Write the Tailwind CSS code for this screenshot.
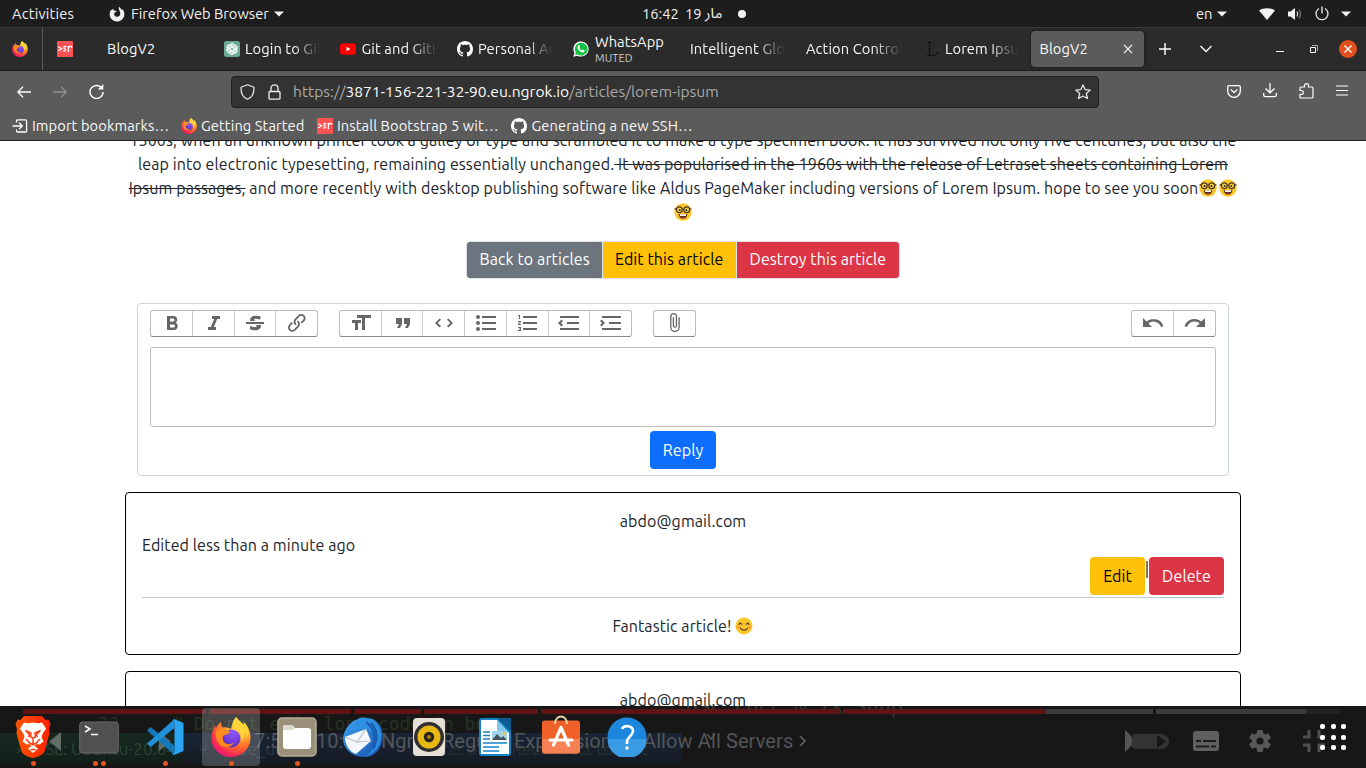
<!DOCTYPE html>
<html lang="en">
<head>
<meta charset="utf-8">
<title>BlogV2</title>
<script src="https://cdn.jsdelivr.net/npm/@tailwindcss/browser@4"></script>
</head>
<body class="w-[1366px] h-[768px] overflow-hidden relative flex flex-col bg-white text-[#212529] font-[Ubuntu,'Noto_Sans','Noto_Sans_Arabic',sans-serif]">

<!-- shared symbols -->
<svg class="absolute size-0">
  <defs>
    <radialGradient id="fxo" cx=".75" cy=".15" r="1"><stop offset="0" stop-color="#fff44f"/><stop offset=".35" stop-color="#ffb52e"/><stop offset=".6" stop-color="#ff6a2b"/><stop offset=".85" stop-color="#f5235b"/><stop offset="1" stop-color="#e31587"/></radialGradient>
    <radialGradient id="fxp" cx=".6" cy=".2" r=".9"><stop offset="0" stop-color="#9059ff"/><stop offset=".6" stop-color="#7139d8"/><stop offset="1" stop-color="#4b2ba8"/></radialGradient>
    <linearGradient id="brave" x1="0" x2="1"><stop offset="0" stop-color="#ff5500"/><stop offset="1" stop-color="#ff2200"/></linearGradient>
    <linearGradient id="tb" x1="0" y1="0" x2="1" y2="1"><stop offset="0" stop-color="#3ba6f0"/><stop offset="1" stop-color="#1b4fae"/></linearGradient>
  </defs>
  <symbol id="firefox" viewBox="0 0 40 40">
    <path fill="url(#fxo)" d="M25 0c2 3 5 5 8 8 0-1 0-2-.4-3C37 9 40 15 39.500 22 39 32 30.500 40 20 40S.5 32 .5 21C.5 16 2 12 4.500 8c0 1 0 2 .5 3C6 9 8 6 10 5c-.3 2 .5 4 1.500 5.500 3-.6 6 .2 8.500 1.500 1-5 2-9 5-12z"/>
    <circle cx="20.500" cy="21.500" r="9" fill="url(#fxp)"/>
    <path fill="#ff8a1e" d="M5 13c4-3 10-2 14 2-1 2-4 2.500-6 3.500-1.500.8-2 3-1 5 2 4 7 5 11 2-3 6-12 6-16 0C5 22 4 17 5 13z"/>
    <path fill="#ffd43a" d="M25 0c-3 5-1 9 2 12 3 3 4 7 3 11 3-2 4-6 3-9 2 2 4 5 4 8 1-7-1-12-4.500-17 .3 1 .5 2 .5 3-3-3-6-5-8-8z"/>
  </symbol>
  <symbol id="github" viewBox="0 0 16 16"><path d="M8 0C3.580 0 0 3.580 0 8c0 3.540 2.290 6.530 5.470 7.590.4.070.55-.17.55-.38 0-.19-.01-.82-.01-1.490-2.010.37-2.530-.49-2.690-.94-.09-.23-.48-.94-.82-1.130-.28-.15-.68-.52-.01-.53.63-.01 1.080.58 1.230.82.72 1.210 1.870.87 2.330.66.07-.52.28-.87.51-1.070-1.780-.2-3.640-.89-3.640-3.950 0-.87.31-1.590.82-2.150-.08-.2-.36-1.020.08-2.120 0 0 .67-.21 2.200.82.640-.18 1.320-.27 2-.27s1.360.09 2 .27c1.530-1.040 2.200-.82 2.200-.82.440 1.100.160 1.920.080 2.120.510.560.820 1.270.820 2.150 0 3.070-1.870 3.750-3.650 3.950.290.250.540.730.540 1.480 0 1.070-.01 1.930-.01 2.200 0 .210.150.460.550.380A8.010 8.010 0 0 0 16 8c0-4.420-3.580-8-8-8z"/></symbol>
  <symbol id="sr" viewBox="0 0 16 16"><rect width="16" height="16" rx=".8" fill="#ff5252"/><g fill="none" stroke="#fff" stroke-width="1.300"><path d="M1.300 5.800 4.500 7.800 1.300 9.800M9.400 5.800C7 4.800 6 6.500 7.600 7.500S9.200 10.600 6 9.700M11.400 11V5M11.400 7.600c.2-2 1.500-2.600 3.200-2v1.500"/></g></symbol>
  <symbol id="nerd" viewBox="0 0 18 18">
    <circle cx="9" cy="9" r="8.700" fill="#fcc829"/><path d="M4.500 11.300h9c-.5 3.200-2.300 4.500-4.500 4.500S5 14.500 4.500 11.300z" fill="#5b3419"/><path d="M6 11.300h6v1.700H6z" fill="#fff"/><path d="M7 15c1.500-.8 2.500-.8 4 0-1 1-3 1-4 0z" fill="#ef5350"/>
    <g fill="#fbd34a" stroke="#4a3622" stroke-width="1.200"><circle cx="5.300" cy="6.800" r="2.900"/><circle cx="12.700" cy="6.800" r="2.900"/><path d="M8.200 6.500c.4-.6 1.200-.6 1.600 0M.6 5.800h1.700M15.700 5.800h1.700"/></g><circle cx="5.600" cy="6.900" r="1" fill="#3b2a1c"/><circle cx="12.400" cy="6.900" r="1" fill="#3b2a1c"/>
  </symbol>
  <symbol id="smile" viewBox="0 0 18 18"><circle cx="9" cy="9" r="8.500" fill="#fcc829"/><g fill="#f59a3c" opacity=".7"><circle cx="3.700" cy="10" r="2"/><circle cx="14.300" cy="10" r="2"/></g><g fill="none" stroke="#543519" stroke-width="1.200" stroke-linecap="round"><path d="M4 7.300c.6-1.600 2-1.600 2.600 0M11.400 7.300c.6-1.600 2-1.600 2.600 0M5.500 11.300c1.500 2.500 5.500 2.500 7 0"/></g></symbol>
</svg>

<!-- system bar -->
<header class="h-[27px] shrink-0 bg-[#1d1d1d] text-[#f2f2f2] text-[14.667px] leading-[27px] flex items-center whitespace-nowrap">
  <span class="ml-3 w-[97px] shrink-0 tracking-[0.2px]">Activities</span>
  <svg class="w-4 h-4 shrink-0" viewBox="0 0 16 16"><path fill="#f2f2f2" d="M10 .5c.5 1.200 2 2 3 3.500l.2-1C15 5 15.600 7 15.300 9c-.5 4-3.600 6.500-7.300 6.500S.7 12.500.7 8.500c0-2 .5-3.500 1.500-5l.3 1L4.300 2.500l.3 2c1.300-.2 2.500.1 3.200.8-.5.9-1.800.8-2.300 1.500-.9 1.500.2 4 2.500 4 2.400 0 3.800-2 3.200-4.300C10.700 4.500 9 3 10 .5z"/></svg>
  <span class="ml-[6px] w-[138px] shrink-0">Firefox Web Browser</span>
  <svg class="ml-[5px] w-[10px] h-[6px] shrink-0" viewBox="0 0 10 6"><path d="M0 .5h10L5 5.500z" fill="#f2f2f2"/></svg>
  <span class="ml-[358px] w-[36px] shrink-0">16:42</span>
  <span class="ml-[7px] w-[16px] shrink-0">19</span>
  <span class="ml-1 w-[20px] shrink-0 leading-5 pb-[2px]" lang="ar">مار</span>
  <i class="ml-[13px] size-2 shrink-0 rounded-full bg-[#f2f2f2]"></i>
  <span class="ml-[450px] w-[16px] shrink-0">en</span>
  <svg class="ml-[5px] w-[10px] h-[6px]" viewBox="0 0 10 6"><path d="M0 .5h10L5 5.500z" fill="#f2f2f2"/></svg>
  <svg class="ml-[32px] w-4 h-3" viewBox="0 0 16 12"><path d="M0 2.500C4-.5 12-.5 16 2.500L8 12z" fill="#f2f2f2"/></svg>
  <svg class="ml-[12px] w-4 h-3" viewBox="0 0 16 12"><path d="M1 3.500h2.500L8 0v12L3.500 8.500H1z" fill="#f2f2f2"/><path d="M10 3.500q1.500 2.500 0 5" fill="none" stroke="#ddd" stroke-width="1.300"/><path d="M12 1.500q3 4.500 0 9" fill="none" stroke="#777" stroke-width="1.200"/></svg>
  <svg class="ml-[11px] w-4 h-4" viewBox="0 0 16 16"><path d="M5 2.500a6 6 0 1 0 6 0M8 .5v7" fill="none" stroke="#eee" stroke-width="1.300"/></svg>
  <svg class="ml-[11px] w-[10px] h-[6px]" viewBox="0 0 10 6"><path d="M0 .5h10L5 5.500z" fill="#f2f2f2"/></svg>
</header>

<!-- tab strip -->
<nav class="h-[44px] shrink-0 bg-[#2b2b2b] border-t border-t-[#3a3a3a] border-b border-b-[#1a1a1a] text-[#f9f9f9] text-[14.667px] tracking-[0.1px] flex items-center whitespace-nowrap">
  <div class="w-[43px] h-full border-r border-[#5a5a5a] flex items-center pl-3 shrink-0"><svg class="size-4"><use href="#firefox"/></svg></div>
  <div class="w-[172px] shrink-0 flex items-center pl-[14px]"><svg class="size-4"><use href="#sr"/></svg><span class="ml-[34px]">BlogV2</span></div>
  <div class="w-[116.500px] shrink-0 flex items-center pl-[9px]"><svg class="size-4 shrink-0" viewBox="0 0 16 16"><rect width="16" height="16" rx="2.500" fill="#6aab96"/><g fill="none" stroke="#fff" stroke-width=".9"><path id="pt" d="M6 3.800a2.500 2.500 0 0 1 4.500-.1M6 3.800v4.800l3 1.600M6 5.200 9 3.500l3 1.800"/><use href="#pt" transform="rotate(60 8 8)"/><use href="#pt" transform="rotate(120 8 8)"/><use href="#pt" transform="rotate(180 8 8)"/><use href="#pt" transform="rotate(240 8 8)"/><use href="#pt" transform="rotate(300 8 8)"/></g></svg><span class="ml-[5px] w-[75px] overflow-hidden [mask-image:linear-gradient(90deg,#000_65%,transparent)]">Login to GitHub</span></div>
  <div class="w-[116.500px] shrink-0 flex items-center pl-[8.500px]"><svg class="size-4 shrink-0" viewBox="0 0 16 16"><rect y="2.300" width="16" height="11.400" rx="3" fill="#f00"/><path d="M6.500 5.700v4.600l4-2.300z" fill="#fff"/></svg><span class="ml-[5.500px] w-[75px] overflow-hidden [mask-image:linear-gradient(90deg,#000_65%,transparent)]">Git and GitHub</span></div>
  <div class="w-[116.500px] shrink-0 flex items-center pl-[9px]"><svg class="size-4 shrink-0" fill="#fff"><use href="#github"/></svg><span class="ml-[5px] w-[75px] overflow-hidden [mask-image:linear-gradient(90deg,#000_65%,transparent)]">Personal Acc</span></div>
  <div class="w-[116.500px] shrink-0 flex items-center pl-[8.500px]"><svg class="size-4 shrink-0" viewBox="0 0 16 16"><path d="M.3 15.700 1.400 11.800A7.600 7.600 0 1 1 4.400 14.700z" fill="#fff"/><path d="M2 14 2.800 11.500a6.400 6.400 0 1 1 2 2z" fill="#12c143"/><path d="M5.300 4.200c.7-.5 1-.2 1.700 1.600L6.400 6.900c.6 1.300 1.500 2 2.700 2.600l.8-.9c1.800.8 2 1 1.700 1.700-1 2-3.500 1.200-5.300-.5C4.500 8 3.900 5.800 5.300 4.200z" fill="#fff"/></svg><span class="ml-[6px] flex flex-col"><span class="leading-[16px]">WhatsApp</span><span class="text-[11px] leading-[13px] text-[#ccc] pt-[2px]">MUTED</span></span></div>
  <div class="w-[116.500px] shrink-0 pl-[9px]"><span class="block w-[95px] overflow-hidden [mask-image:linear-gradient(90deg,#000_70%,transparent)]">Intelligent Global</span></div>
  <div class="w-[116.500px] shrink-0 pl-[8.500px]"><span class="block w-[96px] overflow-hidden [mask-image:linear-gradient(90deg,#000_70%,transparent)]">Action Controller</span></div>
  <div class="w-[116.500px] shrink-0 flex items-center pl-[12px]"><svg class="w-3 h-4 shrink-0" viewBox="0 0 12 16"><path d="M1 1.500h5M3.500 1.500v13M1 14.500h9M11 11v3" stroke="#0c0c0c" stroke-width="1.200" stroke-dasharray="2 .7" fill="none"/></svg><span class="ml-[7px] w-[73px] overflow-hidden [mask-image:linear-gradient(90deg,#000_60%,transparent)]">Lorem Ipsum</span></div>
  <div class="w-[113px] h-[36px] mt-[-1px] shrink-0 rounded bg-[#5b5b5b] shadow-[0_0_3px_#111] flex items-center justify-between pl-[9px] pr-[11px]"><span>BlogV2</span><svg class="size-[10px]" viewBox="0 0 10 10"><path d="M1 1l8 8M9 1 1 9" stroke="#eee" stroke-width="1.100"/></svg></div>
  <svg class="ml-[15.500px] size-3 shrink-0" viewBox="0 0 12 12"><path d="M6 0v12M0 6h12" stroke="#fff" stroke-width="1.400"/></svg>
  <svg class="ml-[29px] w-3 h-2 shrink-0" viewBox="0 0 12 8"><path d="M.5 1 6 6.500 11.500 1" fill="none" stroke="#fff" stroke-width="1.300"/></svg>
  <svg class="ml-[64px] w-2 h-2 shrink-0" viewBox="0 0 8 8"><path d="M0 6.500h8" stroke="#fff"/></svg>
  <svg class="ml-[26px] size-2 shrink-0" viewBox="0 0 8 8"><path d="M.5 2.500h5v5h-5z" fill="none" stroke="#fff"/><path d="M2 .5h5.500V6" fill="none" stroke="#aaa"/></svg>
  <svg class="ml-[21px] size-[18px] shrink-0" viewBox="0 0 18 18"><circle cx="9" cy="9" r="9" fill="#e2501e"/><path d="M5.500 5.500l7 7M12.500 5.500l-7 7" stroke="#fff" stroke-width="1.400"/></svg>
</nav>

<!-- navigation and bookmarks -->
<div class="h-[70px] shrink-0 bg-[#5b5b5b] border-b border-[#1f1f1f] text-[#f9f9f9] text-[14.667px] tracking-[0.1px] whitespace-nowrap">
  <div class="h-[41px] flex items-center *:shrink-0">
    <svg class="ml-[17px] w-[14px] h-3" viewBox="0 0 14 12"><path d="M14 6H1M6 .8.800 6 6 11.200" fill="none" stroke="#fff" stroke-width="1.300"/></svg>
    <svg class="ml-[22px] w-[14px] h-3" viewBox="0 0 14 12"><path d="M0 6h13M8 .8 13.200 6 8 11.200" fill="none" stroke="#929292" stroke-width="1.300"/></svg>
    <svg class="ml-[22px] size-[15px]" viewBox="0 0 15 15"><path d="M13 4.500a6.500 6.500 0 1 0 1 3.500" fill="none" stroke="#fff" stroke-width="1.400"/><path d="M14.300 0v5.500H8.800z" fill="#fff"/></svg>
    <div class="ml-[127px] w-[868px] h-8 rounded border border-[#202020] bg-[#333] flex items-center *:shrink-0">
      <svg class="ml-2 w-[15px] h-4" viewBox="0 0 15 16"><path d="M7.500.8 14 3.200C14.200 9 12 13.500 7.500 15.300 3 13.500.8 9 1 3.200z" fill="none" stroke="#eee" stroke-width="1.200" stroke-linejoin="round"/></svg>
      <svg class="ml-[13px] w-[13px] h-4" viewBox="0 0 13 16"><path d="M2 7.500h9a1 1 0 0 1 1 1v5.700a1 1 0 0 1-1 1H2a1 1 0 0 1-1-1V8.500a1 1 0 0 1 1-1zM3 7.500V4.200c0-4.400 7-4.400 7 0v3.300" fill="none" stroke="#eee" stroke-width="1.300"/></svg>
      <span class="ml-[12px] w-[426px] text-[#aaa] text-[15.600px] tracking-normal">https://<span class="text-[#fbfbfe]">3871-156-221-32-90.eu.ngrok.io</span>/articles/lorem-ipsum</span>
      <svg class="ml-[356px] size-4" viewBox="0 0 16 16"><path d="M8 .9l2.100 4.700 5.100.5-3.900 3.400 1.200 5L8 11.900l-4.500 2.600 1.200-5L.8 6.100l5.100-.5z" fill="none" stroke="#eee" stroke-width="1.200" stroke-linejoin="round"/></svg>
    </div>
    <svg class="ml-[128px] w-[14px] h-[13px]" viewBox="0 0 14 13"><path d="M2 .7h10q1.300 0 1.300 1.300v4a6.300 6.300 0 0 1-12.600 0V2Q.7.700 2 .7zM3.800 4.500 7 7.600l3.200-3.100" fill="none" stroke="#fff" stroke-width="1.300"/></svg>
    <svg class="ml-[22px] mt-[-3px] w-[14px] h-4" viewBox="0 0 14 16"><path d="M7 1v9.500M2.500 6.500 7 10.800l4.500-4.300M.7 11v2q0 1.600 1.600 1.600h9.400q1.600 0 1.600-1.600v-2" fill="none" stroke="#fff" stroke-width="1.300"/></svg>
    <svg class="ml-[22px] mt-[-2px] w-[15px] h-4" viewBox="0 0 15 16"><path d="M5.500 4V2.500c0-2.500 4-2.500 4 0V4H13q1 0 1 1v9q0 1-1 1H2q-1 0-1-1v-2.700h1.500c2.400 0 2.400-3.800 0-3.800H1V5q0-1 1-1z" fill="none" stroke="#fff" stroke-width="1.200"/></svg>
    <svg class="ml-[22px] mt-[-2px] w-3 h-[11px]" viewBox="0 0 12 11"><path d="M0 1h12M0 5.500h12M0 10h12" stroke="#fff" stroke-width="1.200"/></svg>
  </div>
  <div class="h-[28px] flex items-center *:shrink-0">
    <svg class="ml-3 size-4" viewBox="0 0 16 16"><path d="M4.500 4.500V3Q4.500 1.800 5.800 1.800h7.500q1.300 0 1.300 1.300v9.600q0 1.300-1.300 1.300H5.800q-1.300 0-1.300-1.300V11.500M.5 8H10M7 4.800 10.300 8 7 11.200" fill="none" stroke="#fff" stroke-width="1.300"/></svg>
    <span class="ml-1 w-[137px]">Import bookmarks…</span>
    <svg class="ml-3 size-4"><use href="#firefox"/></svg>
    <span class="ml-1 w-[103px]">Getting Started</span>
    <svg class="ml-[13px] size-4"><use href="#sr"/></svg>
    <span class="ml-1 w-[161px]">Install Bootstrap 5 wit…</span>
    <svg class="ml-[13px] size-4" fill="#fff"><use href="#github"/></svg>
    <span class="ml-[4.500px] w-[160px]">Generating a new SSH…</span>
  </div>
</div>

<!-- page -->
<main class="h-[627px] shrink-0 overflow-hidden text-[16px] tracking-[0.09px] leading-6 whitespace-nowrap flex flex-col items-center">
  <div class="mt-[-13px] h-6 shrink-0">1500s, when an unknown printer took a galley of type and scrambled it to make a type specimen book. It has survived not only five centuries, but also the</div>
  <div class="h-6 shrink-0">leap into electronic typesetting, remaining essentially unchanged.<s> It was popularised in the 1960s with the release of Letraset sheets containing Lorem</s></div>
  <div class="h-6 shrink-0 flex items-center"><span><s>Ipsum passages,</s> and more recently with desktop publishing software like Aldus PageMaker including versions of Lorem Ipsum. hope to see you soon</span><svg class="ml-[1px] size-[18px]"><use href="#nerd"/></svg><svg class="ml-[2px] size-[18px]"><use href="#nerd"/></svg></div>
  <div class="h-6 shrink-0 flex items-center"><svg class="size-[18px]"><use href="#nerd"/></svg></div>
  <div class="mt-[17px] h-[38px] w-[434px] shrink-0 rounded border border-[#dee2e6] overflow-hidden flex leading-[35px] text-white">
    <div class="w-[136px] bg-[#6c757d] border-r border-[#dee2e6] pl-[12.500px]">Back to articles</div>
    <div class="w-[134px] bg-[#ffc107] border-r border-[#dee2e6] text-black pl-3">Edit this article</div>
    <div class="w-[162px] bg-[#dc3545] pl-[12.500px]">Destroy this article</div>
  </div>

  <form class="mt-[24px] w-[1092px] h-[173px] shrink-0 border border-[#ced4da] rounded pt-[6px] px-3 flex flex-col items-center">
    <div class="w-full flex h-[27px] text-[#666] [&_svg]:relative [&_svg]:-top-px">
      <div class="flex border border-[#bbb] border-b-[#888] rounded-[3px] divide-x divide-[#ccc] w-[168px] *:flex-1 *:flex *:items-center *:justify-center *:pl-px">
        <span><svg class="size-6 shrink-0" fill="currentColor" viewBox="0 0 24 24"><path d="M15.600 11.800c1-.7 1.600-1.800 1.600-2.800a4 4 0 0 0-4-4H7v14h7c2.100 0 3.700-1.700 3.700-3.800 0-1.500-.8-2.800-2.100-3.400zM10 7.500h3a1.500 1.500 0 1 1 0 3h-3v-3zm3.500 9H10v-3h3.500a1.500 1.500 0 1 1 0 3z"/></svg></span>
        <span><svg class="size-6 shrink-0" fill="currentColor" viewBox="0 0 24 24"><path d="M10 5v3h2.200l-3.400 8H6v3h8v-3h-2.200l3.400-8H18V5h-8z"/></svg></span>
        <span><svg class="size-6 shrink-0" fill="currentColor" viewBox="0 0 24 24"><path d="M12.730 14l.28.14c.26.15.45.3.57.44.12.14.18.3.18.5 0 .3-.15.56-.44.75-.3.2-.76.3-1.390.3A13.520 13.520 0 0 1 7 14.950v3.370a10.640 10.640 0 0 0 4.840.88c1.260 0 2.350-.19 3.280-.56.93-.37 1.640-.9 2.140-1.570s.74-1.450.74-2.320c0-.26-.02-.51-.06-.75h-5.210zm-5.500-4c-.08-.34-.12-.7-.12-1.100 0-1.290.52-2.300 1.580-3.020 1.050-.72 2.500-1.080 4.340-1.080 1.620 0 3.280.34 4.970 1l-1.300 2.930c-1.470-.6-2.730-.9-3.800-.9-.55 0-.96.08-1.200.26-.26.17-.38.38-.38.64 0 .27.16.52.48.74.17.12.53.3 1.050.53H7.230zM3 13h18v-2H3v2z"/></svg></span>
        <span><svg class="size-6 shrink-0" fill="currentColor" viewBox="0 0 24 24"><path d="M9.880 13.700a4.300 4.300 0 0 1 0-6.070l3.370-3.370a4.260 4.260 0 0 1 6.070 0 4.300 4.300 0 0 1 0 6.060l-1.960 1.720a.91.91 0 1 1-1.300-1.300l1.970-1.710a2.460 2.460 0 0 0-3.480-3.480l-3.380 3.370a2.460 2.460 0 0 0 0 3.480.91.91 0 1 1-1.300 1.300z"/><path d="M4.250 19.460a4.300 4.300 0 0 1 0-6.070l1.930-1.900a.91.91 0 1 1 1.300 1.300l-1.930 1.900a2.460 2.460 0 0 0 3.480 3.480l3.370-3.380c.96-.96.96-2.520 0-3.480a.91.91 0 1 1 1.300-1.300 4.300 4.300 0 0 1 0 6.070l-3.380 3.380a4.260 4.260 0 0 1-6.070 0z"/></svg></span>
      </div>
      <div class="ml-[21px] flex border border-[#bbb] border-b-[#888] rounded-[3px] divide-x divide-[#ccc] w-[293px] *:flex-1 *:flex *:items-center *:justify-center *:pl-px">
        <span><svg class="size-6 shrink-0" fill="currentColor" viewBox="0 0 24 24"><path d="M12 9v3H9v7H6v-7H3V9h9zM8 4h14v3h-6v12h-3V7H8V4z"/></svg></span>
        <span><svg class="size-6 shrink-0" fill="currentColor" viewBox="0 0 24 24"><path d="M6 17h3l2-4V7H5v6h3zm8 0h3l2-4V7h-6v6h3z"/></svg></span>
        <span><svg class="size-6 shrink-0" fill="currentColor" viewBox="0 0 24 24"><path d="M18.200 12L15 15.200l1.400 1.400L21 12l-4.600-4.600L15 8.800l3.200 3.200zM5.800 12L9 8.800 7.600 7.400 3 12l4.600 4.600L9 15.200 5.800 12z"/></svg></span>
        <span><svg class="size-6 shrink-0" fill="currentColor" viewBox="0 0 24 24"><path d="M4 4a2 2 0 1 0 0 4 2 2 0 0 0 0-4zm0 6a2 2 0 1 0 0 4 2 2 0 0 0 0-4zm0 6a2 2 0 1 0 0 4 2 2 0 0 0 0-4zm4 3h14v-2H8v2zm0-6h14v-2H8v2zm0-8v2h14V5H8z"/></svg></span>
        <span><svg class="size-6 shrink-0" fill="currentColor" viewBox="0 0 24 24"><path d="M2 17h2v.5H3v1h1v.5H2v1h3v-4H2v1zm1-9h1V4H2v1h1v3zm-1 3h1.800L2 13.100v.9h3v-1H3.200L5 10.900V10H2v1zm5-6v2h14V5H7zm0 14h14v-2H7v2zm0-6h14v-2H7v2z"/></svg></span>
        <span><svg class="size-6 shrink-0" fill="currentColor" viewBox="0 0 24 24"><path d="M3 19h19v-2H3v2zm7-6h12v-2H10v2zm-8.300-.3l2.800 2.900L6 14.200 4 12l2-2-1.400-1.500L1 12l.7.7zM3 5v2h19V5H3z"/></svg></span>
        <span><svg class="size-6 shrink-0" fill="currentColor" viewBox="0 0 24 24"><path d="M3 19h19v-2H3v2zm7-6h12v-2H10v2zm-6.900-1L1 14.200l1.400 1.400L6 12l-.7-.7-2.800-2.800L1 9.900 3.100 12zM3 5v2h19V5H3z"/></svg></span>
      </div>
      <div class="ml-[21px] w-[43px] flex items-center justify-center border border-[#bbb] border-b-[#888] rounded-[3px]"><svg class="w-[21px] h-[21px]" fill="currentColor" viewBox="0 0 24 24"><path d="M16.500 6v11.500a4 4 0 1 1-8 0V5a2.500 2.500 0 0 1 5 0v10.500a1 1 0 1 1-2 0V6H10v9.500a2.500 2.500 0 0 0 5 0V5a4 4 0 1 0-8 0v12.500a5.500 5.500 0 0 0 11 0V6h-1.500z"/></svg></div>
      <div class="ml-auto flex border border-[#bbb] border-b-[#888] rounded-[3px] divide-x divide-[#ccc] w-[85px] *:flex-1 *:flex *:items-center *:justify-center">
        <span><svg class="size-6 shrink-0" fill="currentColor" viewBox="0 0 24 24"><path d="M12.500 8c-2.600 0-5 1-6.900 2.600L2 7v9h9l-3.600-3.600A8 8 0 0 1 20 16l2.400-.8a10.500 10.500 0 0 0-10-7.200z"/></svg></span>
        <span><svg class="size-6 shrink-0" fill="currentColor" viewBox="0 0 24 24"><path d="M18.400 10.600a10.500 10.500 0 0 0-16.900 4.600L4 16a8 8 0 0 1 12.700-3.600L13 16h9V7l-3.600 3.600z"/></svg></span>
      </div>
    </div>
    <div class="mt-[10px] w-full h-[80px] shrink-0 border border-[#bbb] rounded-[3px]"></div>
    <div class="mt-1 w-[66px] h-[38px] shrink-0 rounded bg-[#0d6efd] text-white leading-[38px] flex justify-center">Reply</div>
  </form>

  <article class="mt-4 w-[1116px] h-[163px] shrink-0 border border-black rounded px-4 pt-4 flex flex-col items-center">
    <div class="h-6">abdo@gmail.com</div>
    <div class="h-6 w-full">Edited less than a minute ago</div>
    <div class="w-full h-[41px] border-b border-[#c8c8c8] flex justify-end leading-[38px]">
      <div class="w-[55px] h-[38px] rounded bg-[#ffc107] text-black flex justify-center">Edit</div>
      <i class="mt-1 ml-[1px] mr-[1px] w-[2px] h-[17px] bg-linear-to-r from-[#a9744a] to-[#56728a]"></i>
      <div class="w-[75px] h-[38px] rounded bg-[#dc3545] text-white flex justify-center">Delete</div>
    </div>
    <div class="mt-4 h-6 flex items-center">Fantastic article!<svg class="ml-[4px] size-[18px]"><use href="#smile"/></svg></div>
  </article>
  <article class="mt-4 w-[1116px] h-[163px] shrink-0 border border-black rounded px-4 pt-4 flex flex-col items-center">
    <div class="h-6">abdo@gmail.com</div>
  </article>
</main>

<!-- dock, translucent over the windows behind it -->
<footer class="absolute left-0 top-[706px] w-[1366px] h-[62px] bg-[#171717] overflow-hidden whitespace-nowrap">
  <div class="absolute left-0 top-[27px] w-[184px] h-[30px] bg-linear-to-b from-[#15291f] to-[#13201a]"></div>
  <div class="absolute left-[184px] top-[27px] w-[498px] h-[30px] bg-linear-to-b from-[#182436] to-[#161b24] rounded-br-lg"></div>
  <div class="absolute left-[98px] top-[8px] text-[18px] leading-5 text-[#232b25] font-['DejaVu_Sans_Mono',monospace]">23</div>
  <div class="absolute left-[172px] top-[8px] text-[18px] leading-5 text-[#243322] font-['DejaVu_Sans_Mono',monospace]"># Do not edit long code in bo</div>
  <div class="absolute left-[16px] top-[33px] text-[17px] leading-5 text-[#2b4438]">›‹ WSL: Ubuntu-20.04</div>
  <div class="absolute left-[198px] top-[33px] text-[17px] leading-5 text-[#2b3a42]">⑂ &nbsp; code_demo*</div>
  <div class="absolute left-[448px] top-[33px] text-[17px] leading-5 text-[#25332f]">⚠ 0 &nbsp; &nbsp; &nbsp; &nbsp; Reconnect to Disc</div>
  <div class="absolute left-[686px] top-[-10px] text-[20px] leading-5 text-[#393939] font-['DejaVu_Sans_Mono',monospace]">USE FULL &amp; TX Shup</div>
  <div class="absolute left-[23px] top-[3px] flex gap-[3px] h-[5px] *:h-full">
    <i class="w-[183px] bg-[#5e1414]"></i><i class="w-[142px] bg-[#5e1414]"></i><i class="w-[67px] bg-[#5e1414]"></i><i class="w-[114px] bg-[#5e1414]"></i><i class="w-[299px] bg-[#5e1414]"></i><i class="w-[310px] bg-linear-to-r from-[#5e1414] from-[65.500%] to-[#3c3c3c] to-[65.500%]"></i><i class="w-[185px] bg-linear-to-r from-[#3c3c3c] from-[81%] to-[#232323] to-[81%]"></i>
  </div>
  <svg class="absolute left-[49px] top-[26px] w-3 h-[19px]" viewBox="0 0 12 19"><path d="M12 0v19L0 9.500z" fill="#626c67"/></svg>
  <svg class="absolute left-[159px] top-[26px] w-3 h-[19px]" viewBox="0 0 12 19"><path d="M0 0v19l12-9.500z" fill="#626c67"/></svg>
  <div class="absolute left-0 top-[23px] h-6 text-[20px] leading-6 text-[#535558] font-[Roboto,sans-serif]">
    <span class="absolute left-[254px]">7:57</span><span class="absolute left-[303px]">/</span><span class="absolute left-[316px]">10:43</span>
    <span class="absolute left-[381px]">Ngrok,</span><span class="absolute left-[442px]">Regular</span><span class="absolute left-[514px]">Expressions</span><span class="absolute left-[643px] tracking-[0.1px]">Allow All Servers</span>
  </div>
  <svg class="absolute left-[799px] top-[29px] w-2 h-3" viewBox="0 0 8 12"><path d="M1 1l5 5-5 5" fill="none" stroke="#606060" stroke-width="1.700"/></svg>
  <svg class="absolute left-[706px] top-[27px] w-[10px] h-2" viewBox="0 0 10 8"><path d="M1 1l4 5 4-5" fill="none" stroke="#555" stroke-width="1.500"/></svg>

  <div class="absolute left-[202px] top-[2px] w-[58px] h-[58px] rounded bg-white/20"></div>
  <div class="absolute inset-0 flex *:w-[66px] *:h-[62px] *:pt-[11px] *:flex *:flex-col *:items-center">
    <div><svg class="w-9 h-[42px] mt-[-1px]" viewBox="0 0 36 42"><path d="M9 0h18l3.500 4 3-.5 2 5-1.500 4 .5 5-5 18c-1 3-9 6.500-11.500 6.500S7.500 38.500 6.500 35.500l-5-18 .5-5-1.500-4 2-5 3 .5z" fill="url(#brave)"/><path d="M18 6.500l5 .8 4-.8 4 6-3.500 5.500-1 3 2 4.500-4 3-3-.5-2 2 3.500 2.500-5 4.500-5-4.500 3.500-2.500-2-2-3 .5-4-3 2-4.500-1-3L5 12.500l4-6 4 .8z" fill="#fff"/><path d="M18 22l-2.500-1 .5-4-5.500-2.500 4 4-1 2.500M18 22l2.500-1-.5-4 5.500-2.500-4 4 1 2.500M13 26l5 3 5-3M18 22v7M11 23l3 3M25 23l-3 3M15.500 33.500h5" fill="none" stroke="#fb4212" stroke-width="1.500"/></svg></div>
    <div><svg class="mt-[3px] w-10 h-[34px]" viewBox="0 0 40 34"><rect x=".7" y="2" width="38.600" height="31" rx="3" fill="#505050" stroke="#6a6a6a"/><path d="M6 6l5 3-5 3M12 14.500h7" fill="none" stroke="#fff" stroke-width="1.500"/></svg></div>
    <div><svg class="mt-[1px] w-[38px] h-[38px]" viewBox="0 0 38 38"><path d="M1 12.500 4.500 9l24 19v9z" fill="#1278bd"/><path d="M1 25.500l3.500 3.500 24-19V1z" fill="#2190d8"/><path d="M28 1l9.500 4v28L28 37l-2-1.500c1 .5 2.500 0 2.500-1.500V4.500C28.500 3 27 2 26 3z" fill="#2aa5f2"/></svg></div>
    <div><svg class="w-10 h-10"><use href="#firefox"/></svg></div>
    <div><svg class="w-10 h-10" viewBox="0 0 40 40"><rect x="1" y="1" width="38" height="38" rx="4" fill="#9b9079" stroke="#b7ad98" stroke-width="1.500"/><path d="M6 10q0-2 2-2h7l3 3h13q3 0 3 3v15q0 3-3 3H9q-3 0-3-3z" fill="#fdfdfd"/><path d="M6 12V10q0-2 2-2h7l3 3-2 2H6z" fill="#ddd8cc"/></svg></div>
    <div><svg class="w-[42px] h-[42px] mt-[-1px]" viewBox="0 0 42 42"><path d="M16 3C20 0 26 2 31 3 38 7 42 15 40 25 38 35 31 42 21 41 9 40 1 33 1 22 2 14 7 6 16 3z" fill="url(#tb)"/><path d="M13 8C19-1 34 1 38 14c4 13-5 24-14 26 8-6 11-14 8-21C28 12 22 11 12 14z" fill="#2d8fe0"/><path d="M29 7c6 6 8 16 2 26M24 6c8 6 11 16 7 24" fill="none" stroke="#1759ae" stroke-width="2"/><path d="M3 21l21-8 5 12-15 13C7 36 3 28 3 21z" fill="#f5f7fa"/><path d="M3 21l12 5 9-13M15 26l14-1" fill="none" stroke="#b9c2d0" stroke-width="1.200"/></svg></div>
    <div><svg class="w-[34px] h-10" viewBox="0 0 34 40"><rect x="1" y="1" width="32" height="38" rx="4" fill="#e5dfd5"/><circle cx="17" cy="20" r="15" fill="#303030"/><circle cx="17" cy="20" r="11.500" fill="#e8b813"/><circle cx="17" cy="20" r="5.200" fill="#27221a"/><circle cx="17" cy="20" r="2" fill="#a88100"/></svg></div>
    <div><svg class="w-[34px] h-10" viewBox="0 0 34 40"><rect x="1" y="1" width="32" height="38" rx="3" fill="#1584c7"/><path d="M3 3h16l12 13v21H3z" fill="#fff"/><path d="M19 1h14v14z" fill="#0b5b91"/><path d="M19 3l12 13h-8q-4 0-4-4z" fill="#7cc5ec"/><rect x="14" y="14" width="15" height="9" fill="#9fd4ef"/><path d="M14 23l5-6 4 4 2-2 4 4z" fill="#46515a"/><circle cx="26" cy="16.500" r="1.500" fill="#f3c316"/><path d="M5 15h7M5 18.500h7M5 22h7M5 26h24M5 30h16M5 34h16" stroke="#1584c7" stroke-width="1.500"/></svg></div>
    <div><svg class="mt-[-2px] w-10 h-[42px]" viewBox="0 0 40 42"><rect x="1" y="5.500" width="38" height="33" rx="3" fill="#f06129"/><path d="M1 24h38v11q0 3.500-3 3.500H4q-3 0-3-3.500z" fill="#f68155"/><path d="M14 9c0-10 12-10 12 0" fill="none" stroke="#e7cda0" stroke-width="2"/><path d="M12.500 30 20 12.500 27.500 30M9 25h22" fill="none" stroke="#fff" stroke-width="3.200" stroke-linecap="round" stroke-linejoin="round"/></svg></div>
    <div><svg class="w-10 h-10" viewBox="0 0 40 40"><circle cx="20" cy="20" r="19.500" fill="#1c87dc"/><path d="M.5 22h39a19.500 19.500 0 0 1-39 0z" fill="#3a9be5"/><path d="M15 12c2-4.500 11-3.500 11 2 0 5-6 5.500-6 11v2" fill="none" stroke="#fff" stroke-width="2.600"/><circle cx="20" cy="31" r="1.700" fill="#fff"/></svg></div>
  </div>
  <div class="absolute left-0 top-[55px] flex *:w-[66px] *:flex *:justify-center *:gap-[3px] *:*:size-[5px] *:*:rounded-full *:*:bg-[#e95420]">
    <div><i></i></div><div><i></i><i></i></div><div><i></i></div><div><i></i></div><div><i></i></div>
  </div>
  <svg class="absolute left-[1124px] top-[24px] w-[46px] h-[23px]" viewBox="0 0 46 23"><rect x="5" y="4" width="40" height="15" rx="7.500" fill="#333"/><path d="M1 0q14 11 0 22z" fill="#555"/><path d="M33 5v13l9-6.500z" fill="#171717"/></svg>
  <svg class="absolute left-[1193px] top-[25px] w-[26px] h-5" viewBox="0 0 26 20"><rect width="26" height="20" rx="3" fill="#606060"/><path d="M3 10h5M10 10h13M3 15.500h13M18 15.500h5" stroke="#1d1d1d" stroke-width="2"/></svg>
  <svg class="absolute left-[1248px] top-[23px] w-6 h-6" viewBox="0 0 24 24"><g fill="#585858"><circle cx="12" cy="12" r="8"/><path id="th" d="M9.300 1h5.400l1 6H8.300z"/><use href="#th" transform="rotate(60 12 12)"/><use href="#th" transform="rotate(120 12 12)"/><use href="#th" transform="rotate(180 12 12)"/><use href="#th" transform="rotate(240 12 12)"/><use href="#th" transform="rotate(300 12 12)"/></g><circle cx="12" cy="12" r="3.600" fill="#171717"/></svg>
  <svg class="absolute left-[1302px] top-[24px] w-[24px] h-6" viewBox="0 0 24 24"><path d="M1 7h6V0M1 15h6v7M23 7h-6V0M23 15h-6v7" fill="none" stroke="#505050" stroke-width="3"/></svg>
  <div class="absolute left-[1320px] top-[18px] grid grid-cols-3 gap-[5.500px] *:size-[5px] *:rounded-[2px] *:bg-white"><i></i><i></i><i></i><i></i><i></i><i></i><i></i><i></i><i></i></div>
</footer>
</body>
</html>
